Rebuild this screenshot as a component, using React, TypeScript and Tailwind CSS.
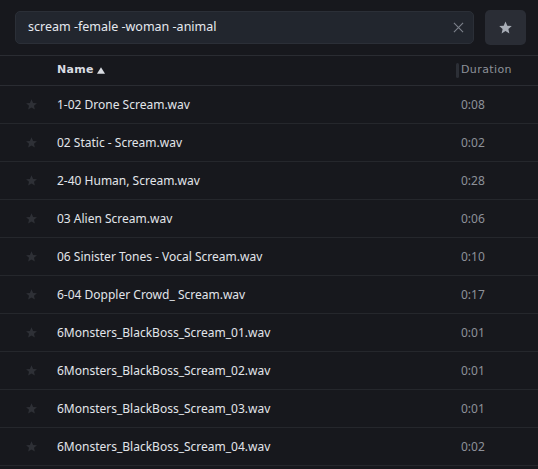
import React from "react";

const rows: [string, string][] = [
  ["1-02 Drone Scream.wav", "0:08"],
  ["02 Static - Scream.wav", "0:02"],
  ["2-40 Human, Scream.wav", "0:28"],
  ["03 Alien Scream.wav", "0:06"],
  ["06 Sinister Tones - Vocal Scream.wav", "0:10"],
  ["6-04 Doppler Crowd_ Scream.wav", "0:17"],
  ["6Monsters_BlackBoss_Scream_01.wav", "0:01"],
  ["6Monsters_BlackBoss_Scream_02.wav", "0:01"],
  ["6Monsters_BlackBoss_Scream_03.wav", "0:01"],
  ["6Monsters_BlackBoss_Scream_04.wav", "0:02"],
];

function Star({ className }: { className?: string }) {
  return (
    <svg viewBox="0 0 24 24" className={className} fill="currentColor">
      <path d="M12 2.5l2.9 6.6 7.1.6-5.4 4.7 1.6 7-6.2-3.7-6.2 3.7 1.6-7L2 9.7l7.1-.6z" />
    </svg>
  );
}

export default function App() {
  return (
    <div
      className="w-[538px] h-[469px] bg-[#17181d] overflow-hidden"
      style={{ fontFamily: '"Noto Sans", "Open Sans", sans-serif' }}
    >
      <div className="flex items-center gap-[11px] pl-[15px] pr-[12px] h-[56px] pt-[2px] pb-[2px] border-b border-[#2a2c32]">
        <div className="flex-1 h-[33px] rounded-[5px] bg-[#22262e] border border-[#2b2f37] flex items-center pl-[12px] pr-[8px]">
          <span className="flex-1 text-[12.5px] text-[#e6e9ee]">scream -female -woman -animal</span>
          <svg viewBox="0 0 12 12" className="w-[11px] h-[11px] text-[#7c818a] mr-[1px]" stroke="currentColor" strokeWidth="1.2">
            <path d="M1 1l10 10M11 1L1 11" />
          </svg>
        </div>
        <div className="w-[41px] h-[35px] rounded-[5px] bg-[#2a2d35] flex items-center justify-center">
          <Star className="w-[15px] h-[15px] text-[#a8adb6]" />
        </div>
      </div>
      <div className="flex items-center h-[30px] border-b border-[#2a2c32]">
        <div className="w-[57px]" />
        <div className="flex-1 flex items-center text-[11px] font-bold text-[#d9dce2] tracking-[0.3px]" style={{ fontFamily: '"DejaVu Sans", sans-serif' }}>
          Name
          <svg viewBox="0 0 10 8" className="w-[8px] h-[7px] ml-[3px] text-[#d9dce2]" fill="currentColor">
            <path d="M5 0l5 8H0z" />
          </svg>
        </div>
        <div className="w-[82px] flex items-center">
          <div className="w-[3px] h-[15px] bg-[#2c2f36] rounded-sm mr-[2px]" />
          <span className="text-[11px] text-[#8d9199] tracking-[0.4px]" style={{ fontFamily: '"DejaVu Sans", sans-serif' }}>Duration</span>
        </div>
      </div>
      {rows.map(([name, dur]) => (
        <div key={name} className="flex items-center h-[38px] border-b border-[#25272c]">
          <div className="w-[57px] flex items-center pl-[25px]">
            <Star className="w-[13px] h-[13px] text-[#2e3036]" />
          </div>
          <div className="flex-1 text-[12px] text-[#e2e5ea]">{name}</div>
          <div className="w-[77px] text-[12px] text-[#8d9199]">{dur}</div>
        </div>
      ))}
    </div>
  );
}
